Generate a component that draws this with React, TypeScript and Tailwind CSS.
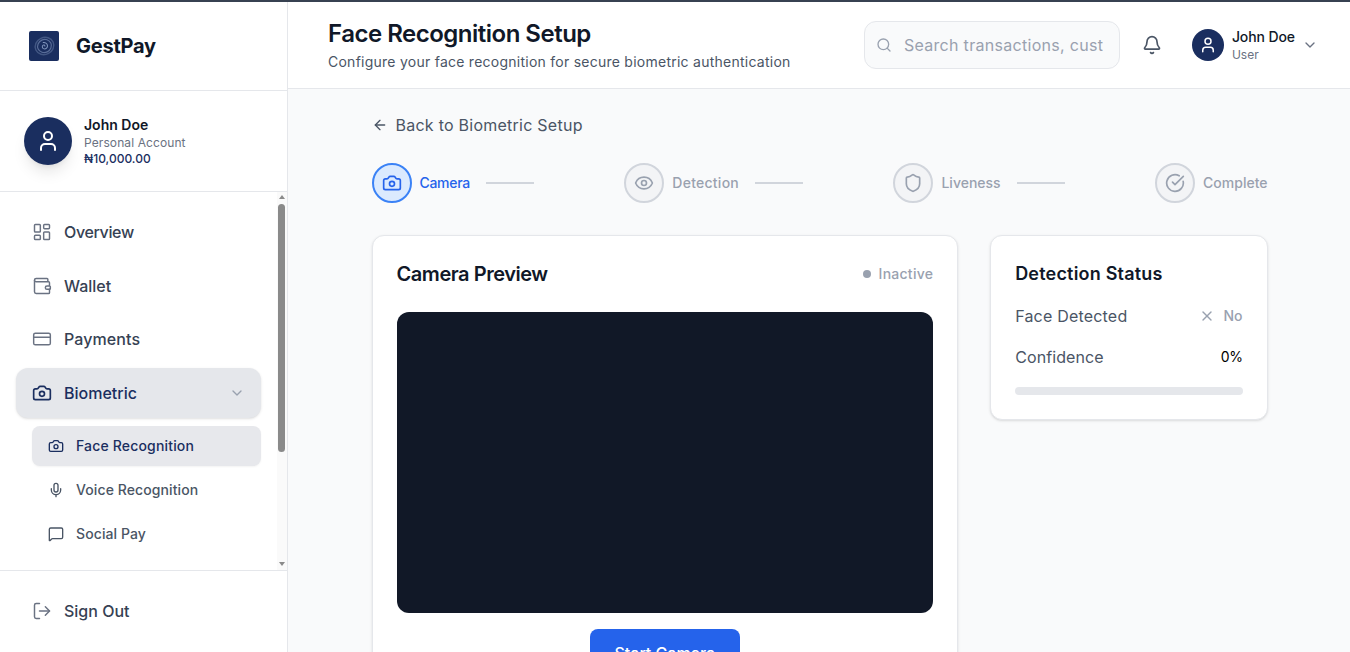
import {
  ArrowLeft,
  Bell,
  Camera,
  ChevronDown,
  CircleCheckBig,
  CreditCard,
  Eye,
  LayoutDashboard,
  LogOut,
  MessageSquare,
  Mic,
  Search,
  Shield,
  User,
  Wallet,
  X,
} from "lucide-react";

const navItems = [
  { label: "Overview", icon: LayoutDashboard, tracking: "tracking-[-0.35px]" },
  { label: "Wallet", icon: Wallet, tracking: "tracking-normal" },
  { label: "Payments", icon: CreditCard, tracking: "tracking-[0.1px]" },
];

const subItems = [
  { label: "Face Recognition", icon: Camera, active: true },
  { label: "Voice Recognition", icon: Mic, active: false },
  { label: "Social Pay", icon: MessageSquare, active: false },
];

const steps = [
  { label: "Camera", icon: Camera, active: true, line: true, tracking: "tracking-[-0.3px]" },
  { label: "Detection", icon: Eye, active: false, line: true, tracking: "tracking-[0.25px]" },
  { label: "Liveness", icon: Shield, active: false, line: true, tracking: "tracking-normal" },
  { label: "Complete", icon: CircleCheckBig, active: false, line: false, tracking: "tracking-normal" },
];

export default function App() {
  return (
    <div className="flex h-[652px] w-[1350px] flex-col overflow-hidden bg-white font-['Inter',sans-serif] text-gray-900">
      <div className="h-[2px] bg-[#374151]" />
      <div className="flex min-h-0 flex-1">
        <Sidebar />
        <main className="flex min-w-0 flex-1 flex-col bg-[#f9fafb]">
          <Header />
          <div className="min-h-0 flex-1 overflow-hidden pl-[83.5px] pt-6">
            <div className="w-[896px]">
              <a className="flex h-6 items-center gap-2 text-base leading-[26px] tracking-[0.25px] text-gray-600">
                <ArrowLeft className="h-4 w-4" />
                Back to Biometric Setup
              </a>
              <div className="mt-[26px] flex items-center justify-between">
                {steps.map((step) => (
                  <Step key={step.label} {...step} />
                ))}
              </div>
              <div className="mt-8 grid grid-cols-3 gap-8">
                <section className="col-span-2 rounded-xl border border-gray-200 bg-white p-6 shadow-sm">
                  <div className="flex h-7 items-center justify-between">
                    <h2 className="text-xl font-semibold tracking-[-0.45px]">Camera Preview</h2>
                    <span className="flex items-center gap-2 text-sm font-medium tracking-[0.25px] text-gray-400">
                      <span className="h-2 w-2 rounded-full bg-gray-400" />
                      Inactive
                    </span>
                  </div>
                  <div className="mt-[23.5px] aspect-video w-full rounded-xl bg-[#111827]" />
                  <div className="mt-4 flex justify-center">
                    <button className="rounded-lg bg-[#2563eb] px-[24.5px] py-3 text-base font-medium text-white">
                      Start Camera
                    </button>
                  </div>
                </section>
                <aside>
                  <section className="rounded-xl border border-gray-200 bg-white p-6 shadow-sm">
                    <h3 className="text-lg font-semibold tracking-[0.2px]">Detection Status</h3>
                    <div className="mt-4 flex h-6 items-center justify-between">
                      <span className="text-base tracking-[0.2px] text-gray-600">Face Detected</span>
                      <span className="flex items-center gap-2 text-sm font-medium text-gray-400">
                        <X className="h-4 w-4" />
                        No
                      </span>
                    </div>
                    <div className="mt-[17px] flex h-6 items-center justify-between">
                      <span className="text-base tracking-[0.1px] text-gray-600">Confidence</span>
                      <span className="text-sm tracking-[-0.4px] text-black">0%</span>
                    </div>
                    <div className="mt-[18px] h-2 rounded-full bg-gray-200" />
                  </section>
                </aside>
              </div>
            </div>
          </div>
        </main>
      </div>
    </div>
  );
}

function Sidebar() {
  return (
    <aside className="flex w-[288px] shrink-0 flex-col border-r border-gray-200 bg-white">
      <div className="flex h-[89px] items-center gap-[17px] border-b border-gray-200 pl-[29px]">
        <Logo />
        <span className="text-xl font-bold tracking-[-0.25px]">GestPay</span>
      </div>
      <div className="flex h-[101px] items-center gap-3 border-b border-gray-200 pl-6">
        <div className="flex h-12 w-12 items-center justify-center rounded-full bg-[#1a2e5f] shadow-lg">
          <User className="h-6 w-6 text-white" />
        </div>
        <div>
          <p className="text-sm leading-5 font-semibold">John Doe</p>
          <p className="text-xs leading-4 tracking-[0.1px] text-gray-500">Personal Account</p>
          <p className="text-xs leading-4 font-medium text-[#1a2e5f]">₦10,000.00</p>
        </div>
      </div>
      <div className="relative min-h-0 flex-1 border-b border-gray-200">
        <nav className="flex flex-col gap-1 pl-4 pr-[26px] pt-[15.5px]">
          {navItems.map(({ label, icon: Icon, tracking }) => (
            <a
              key={label}
              className={`flex h-[49.5px] items-center gap-3 px-4 text-base font-medium text-gray-700 ${tracking}`}
            >
              <Icon className="h-5 w-5 text-gray-500" strokeWidth={1.75} />
              {label}
            </a>
          ))}
          <a className="flex h-[49.5px] items-center gap-3 rounded-xl bg-[#e5e7eb] px-4 text-base font-medium text-[#1a2e5f] shadow-sm">
            <Camera className="h-5 w-5" />
            <span className="flex-1">Biometric</span>
            <ChevronDown className="h-4 w-4 text-gray-400" />
          </a>
          <div className="mt-1 ml-4 flex flex-col gap-1">
            {subItems.map(({ label, icon: Icon, active }) => (
              <a
                key={label}
                className={
                  active
                    ? "flex h-10 items-center gap-3 rounded-lg bg-[#e7e8ec] px-4 text-sm font-medium tracking-[0.17px] text-[#1a2e5f] shadow-xs"
                    : "flex h-10 items-center gap-3 rounded-lg px-4 text-sm font-medium tracking-[0.1px] text-gray-600"
                }
              >
                <Icon className="h-4 w-4" />
                {label}
              </a>
            ))}
          </div>
        </nav>
        <Scrollbar />
      </div>
      <a className="flex h-[81px] items-center gap-3 pb-[2px] pl-8 text-base font-medium text-gray-700">
        <LogOut className="h-5 w-5 text-gray-500" strokeWidth={1.75} />
        Sign Out
      </a>
    </aside>
  );
}

function Scrollbar() {
  return (
    <div className="absolute top-0 right-0 bottom-0 w-[10px] bg-[#fafafa]">
      <div className="absolute top-[3px] left-[2px] h-0 w-0 border-x-[3px] border-b-[4px] border-x-transparent border-b-[#8a8a8a]" />
      <div className="absolute top-[12px] left-[1px] h-[248px] w-[7px] rounded-full bg-[#8a8a8a]" />
      <div className="absolute bottom-[4px] left-[2px] h-0 w-0 border-x-[3px] border-t-[4px] border-x-transparent border-t-[#8a8a8a]" />
    </div>
  );
}

function Logo() {
  return (
    <svg width="30" height="30" viewBox="0 0 30 30" className="rounded-[2px]">
      <rect width="30" height="30" fill="#1a2e5f" />
      <g fill="none" stroke="#8ea3c9" transform="rotate(-25 15.5 15)">
        <ellipse cx="15.5" cy="15" rx="9.5" ry="8.5" strokeWidth="1.4" opacity="0.35" />
        <ellipse cx="15.5" cy="15" rx="7" ry="6.5" strokeWidth="1.2" opacity="0.55" />
        <path
          d="M15.5 15.5c.9-.6.3-2-.8-1.9-1.6.2-2.2 2.2-1.2 3.4 1.4 1.6 4 1 4.8-.9.9-2.2-.6-4.6-2.9-4.9"
          strokeWidth="1"
          opacity="0.9"
        />
      </g>
    </svg>
  );
}

function Header() {
  return (
    <header className="flex h-[87px] shrink-0 items-center justify-between border-b border-gray-200 bg-white pr-8 pl-10">
      <div>
        <h1 className="text-2xl leading-8 font-semibold tracking-[-0.5px]">Face Recognition Setup</h1>
        <p className="mt-0.5 text-sm leading-5 tracking-[0.25px] text-gray-600">
          Configure your face recognition for secure biometric authentication
        </p>
      </div>
      <div className="flex items-center">
        <div className="relative w-64">
          <Search className="absolute top-1/2 left-3 h-4 w-4 -translate-y-1/2 text-gray-400" />
          <input
            placeholder="Search transactions, customers..."
            className="h-12 w-full rounded-xl border border-gray-200 bg-[#f9fafb] pr-4 pl-[39px] text-base tracking-[0.3px] outline-none placeholder:text-gray-400"
          />
        </div>
        <Bell className="ml-[22px] h-5 w-5 text-gray-600" />
        <div className="ml-[30px] flex items-center gap-2">
          <div className="flex h-8 w-8 items-center justify-center rounded-full bg-[#1a2e5f]">
            <User className="h-[18px] w-[18px] text-white" />
          </div>
          <div>
            <p className="text-sm leading-5 font-medium tracking-[-0.1px]">John Doe</p>
            <p className="text-xs leading-4 text-gray-500">User</p>
          </div>
          <ChevronDown className="-ml-px h-4 w-4 text-gray-500" />
        </div>
      </div>
    </header>
  );
}

function Step({
  label,
  icon: Icon,
  active,
  line,
  tracking,
}: {
  label: string;
  icon: typeof Camera;
  active: boolean;
  line: boolean;
  tracking: string;
}) {
  return (
    <div className="flex items-center">
      <div
        className={
          active
            ? "flex h-10 w-10 items-center justify-center rounded-full border-2 border-[#3b82f6] bg-[#dbeafe] text-[#2563eb]"
            : "flex h-10 w-10 items-center justify-center rounded-full border-2 border-gray-300 bg-gray-100 text-gray-400"
        }
      >
        <Icon className="h-5 w-5" />
      </div>
      <span className={`ml-2 text-sm font-medium ${tracking} ${active ? "text-[#2563eb]" : "text-gray-400"}`}>
        {label}
      </span>
      {line && <div className="ml-4 h-0.5 w-12 bg-gray-300" />}
    </div>
  );
}
